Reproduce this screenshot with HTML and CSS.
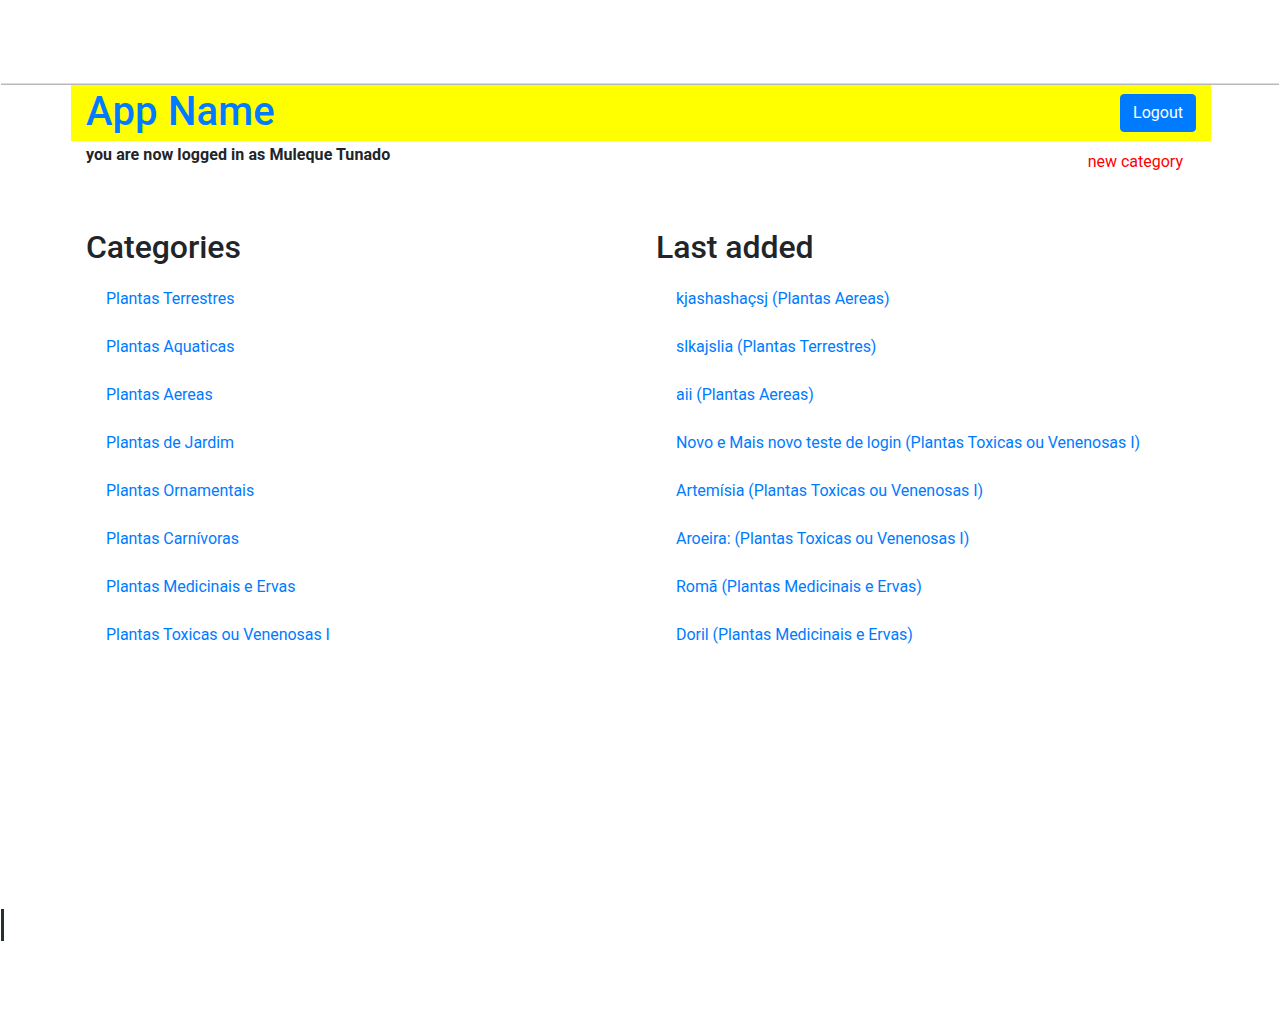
FILE: index.html
```html
<!DOCTYPE html>
<html lang="en">
<head>
<meta charset="utf-8">
<title>App Name</title>
<link rel="stylesheet" href="styles.css">
</head>
<body>
<div class="topspace"></div>
<div class="rule"></div>
<div class="page">
  <div class="container">
    <header class="appbar">
      <h1 class="brand">App Name</h1>
      <button class="btn-logout" type="button">Logout</button>
    </header>
    <div class="inforow">
      <div class="userinfo">you are now logged in as Muleque Tunado</div>
      <a class="newcat" href="#">new category</a>
    </div>
    <div class="columns">
      <section class="col">
        <h2 class="col-title">Categories</h2>
        <ul class="linklist">
          <li><a href="#">Plantas Terrestres</a></li>
          <li><a href="#">Plantas Aquaticas</a></li>
          <li><a href="#">Plantas Aereas</a></li>
          <li><a href="#">Plantas de Jardim</a></li>
          <li><a href="#">Plantas Ornamentais</a></li>
          <li><a href="#">Plantas Carnívoras</a></li>
          <li><a href="#">Plantas Medicinais e Ervas</a></li>
          <li><a href="#">Plantas Toxicas ou Venenosas I</a></li>
        </ul>
      </section>
      <section class="col">
        <h2 class="col-title">Last added</h2>
        <ul class="linklist">
          <li><a href="#">kjashashaçsj (Plantas Aereas)</a></li>
          <li><a href="#">slkajslia (Plantas Terrestres)</a></li>
          <li><a href="#">aii (Plantas Aereas)</a></li>
          <li><a href="#">Novo e Mais novo teste de login (Plantas Toxicas ou Venenosas I)</a></li>
          <li><a href="#">Artemísia (Plantas Toxicas ou Venenosas I)</a></li>
          <li><a href="#">Aroeira: (Plantas Toxicas ou Venenosas I)</a></li>
          <li><a href="#">Romã (Plantas Medicinais e Ervas)</a></li>
          <li><a href="#">Doril (Plantas Medicinais e Ervas)</a></li>
        </ul>
      </section>
    </div>
  </div>
</div>
<div class="caret-bar"></div>
</body>
</html>
```

FILE: styles.css
```css
html, body {
  margin: 0;
  padding: 0;
  background: #ffffff;
}
body {
  font-family: Roboto, "Liberation Sans", sans-serif;
  font-size: 16px;
  line-height: 1.5;
  color: #212529;
}
.topspace {
  height: 83px;
}
.rule {
  margin: 0 1px;
  height: 0;
  border-top: 1px solid #dcdcdc;
  border-bottom: 1px solid #b9b9b9;
}
.page {
  padding-left: 2px;
}
.container {
  width: 1140px;
  margin: 0 auto;
}
.appbar {
  background: #ffff00;
  height: 56px;
  padding: 0 15px;
  display: flex;
  align-items: center;
  justify-content: space-between;
  box-sizing: border-box;
}
.brand {
  margin: 3px 0 5px 0;
  align-self: flex-start;
  font-size: 40px;
  font-weight: 500;
  line-height: 1.2;
  letter-spacing: 0.2px;
  color: #007bff;
}
.btn-logout {
  font-family: inherit;
  font-size: 16px;
  line-height: 1.5;
  color: #ffffff;
  background: #007bff;
  border: 1px solid #007bff;
  border-radius: 4px;
  padding: 6px 12px;
  margin-top: -1px;
  cursor: pointer;
}
.inforow {
  display: flex;
  justify-content: space-between;
  align-items: flex-start;
  padding: 0 15px;
  margin-top: 2px;
}
.userinfo {
  font-weight: 700;
  letter-spacing: 0.07px;
}
.newcat {
  color: #ff0000;
  text-decoration: none;
  padding: 7px 13px 9px 16px;
}
.columns {
  display: grid;
  grid-template-columns: 1fr 1fr;
  margin-top: 45px;
}
.col {
  padding: 0 15px;
}
.col-title {
  margin: 0 0 9px 0;
  font-size: 32px;
  font-weight: 500;
  line-height: 1.2;
  letter-spacing: -0.05px;
}
.linklist {
  list-style: none;
  margin: 0;
  padding: 0;
}
.linklist li {
  padding: 12px 20px;
}
.linklist a {
  color: #007bff;
  text-decoration: none;
  letter-spacing: -0.05px;
}
.caret-bar {
  position: fixed;
  left: 1px;
  top: 909px;
  width: 3px;
  height: 32px;
  background: #263030;
}
```
